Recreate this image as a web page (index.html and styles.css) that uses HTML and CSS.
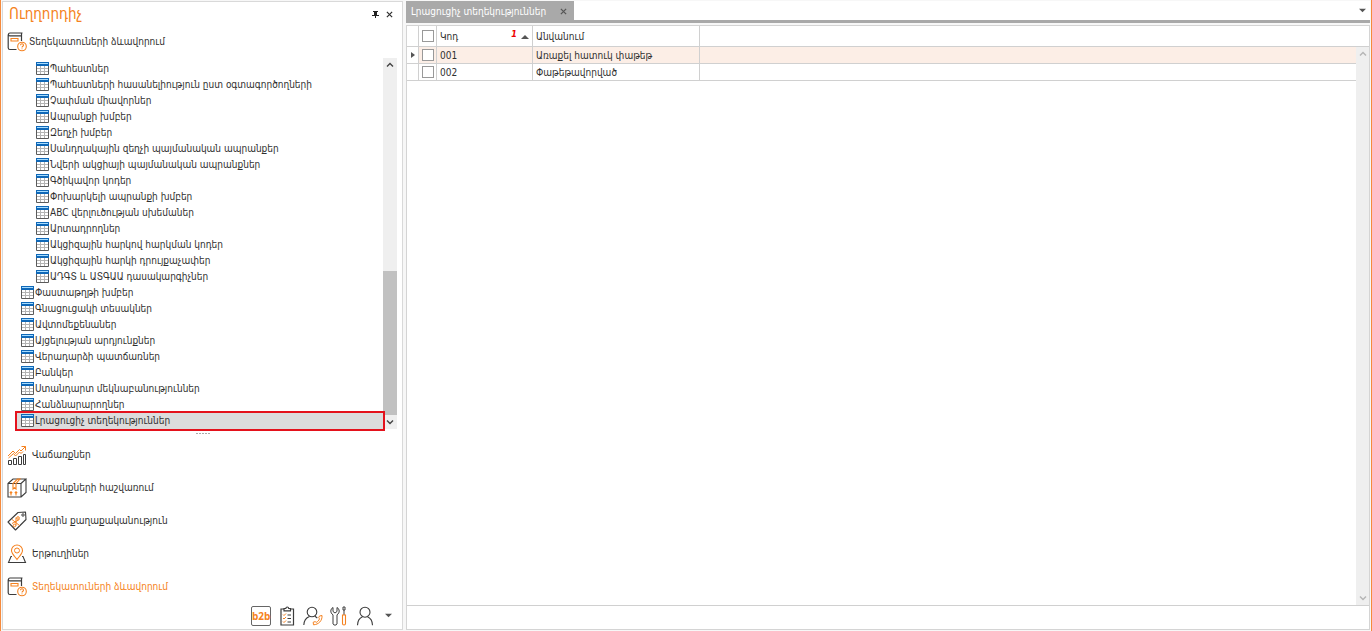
FILE: index.html
```
<!DOCTYPE html>
<html lang="hy">
<head>
<meta charset="utf-8">
<title>Լրացուցիչ տեղեկություններ</title>
<link rel="stylesheet" href="styles.css">
</head>
<body>
<svg class="defs" aria-hidden="true">
  <symbol id="i-table" viewBox="0 0 13 13">
    <path d="M0 0h13v13H0z" fill="#fff"/>
    <path d="M4.500 4v8M8.500 4v8M1 6.500h11M1 9.500h11" stroke="#b4b4b4" fill="none"/>
    <path d="M.5 3v9.500h12V3" stroke="#5a5a5a" fill="none"/>
    <path d="M0 0h13v4H0z" fill="#0f68b8"/>
    <path d="M1 1h11v1H1z" fill="#a5dcff"/>
  </symbol>
  <symbol id="i-book" viewBox="0 0 20 20">
    <g fill="none" stroke="#3c3c3c" stroke-width="1.200">
      <path d="M15.500 1H3C1 1 .8 3.800 3 3.800h11.500V9M1.200 2.500v13.200c0 1.200.7 1.800 1.800 1.800h6.500M14.500 1v2.800"/>
    </g>
    <g fill="none" stroke="#f58220" stroke-width="1.100">
      <path d="M4 6.500h7v2.500H4z"/><circle cx="15" cy="14.500" r="4.300"/>
      <path d="M13.500 13.300c0-2 3-2 3 0 0 1-1.500 1-1.500 2.200M15 16.500v.8"/>
    </g>
  </symbol>
  <symbol id="i-sales" viewBox="0 0 20 20">
    <g fill="none" stroke="#3c3c3c" stroke-width="1">
      <path d="M1.500 15.500h3v4h-3zM6.500 13.500h3v6h-3zM11.500 11.500h3v8h-3zM16.500 9.500h2v10h-2z"/>
    </g>
    <path d="M1 11l5-5 2.500 2.500 4-4 1.500 1.500L18.500 1.500M14.500 1.500h4v4M1.500 13l5-4.500 2 2.500 4-4 1.500 1.500 2-2" fill="none" stroke="#f58220"/>
  </symbol>
  <symbol id="i-box" viewBox="0 0 20 20">
    <path d="M1 5.500h13v13.500H1zM1 5.500L6 1h13l-5 4.500M19 1v13.500L14 19" fill="none" stroke="#3c3c3c" stroke-width="1.100"/>
    <path d="M6 11V5.500L10.500 1H13L9 5.500V11L7.500 9.800zM4 17.500V14M2.800 15L4 13.800 5.200 15M9 17.500V14M7.800 15L9 13.800l1.200 1.200" fill="none" stroke="#f58220" stroke-width="1.100"/>
  </symbol>
  <symbol id="i-tag" viewBox="0 0 20 20">
    <path d="M1 11L11 1.500 18.500 1 19 8.500 8.500 19z" fill="none" stroke="#3c3c3c" stroke-width="1.100" stroke-linejoin="round"/>
    <circle cx="16" cy="4" r="1.200" fill="none" stroke="#3c3c3c"/>
    <path d="M5 8.500l7.500 6M5 12.500l7.500-4M9 6.500v8" fill="none" stroke="#f58220"/>
    <circle cx="11" cy="7" r="1.300" fill="none" stroke="#f58220"/><circle cx="7.500" cy="14.500" r="1.300" fill="none" stroke="#f58220"/>
  </symbol>
  <symbol id="i-pin" viewBox="0 0 20 20">
    <path d="M5 12.500H4L1.500 18.500h17l-2.500-6h-1" fill="none" stroke="#3c3c3c" stroke-width="1.100"/>
    <path d="M10 15.500C7 11.500 4.500 9.500 4.500 6.500a5.500 5.500 0 0 1 11 0c0 3-2.500 5-5.500 9z" fill="#fff" stroke="#f58220" stroke-width="1.100"/>
    <circle cx="10" cy="6.500" r="2.500" fill="none" stroke="#f58220"/>
  </symbol>
  <symbol id="i-list" viewBox="0 0 20 20">
    <path d="M7 3H4v16h12.500V3h-3M7 2.500h1.800C9 .5 11.500.5 11.700 2.500h1.800v2.300H7z" fill="none" stroke="#3c3c3c" stroke-width="1.200"/>
    <path d="M10.500 9H14M10.500 12.500H14M10.500 16H14" stroke="#3c3c3c"/>
    <path d="M6 8.500l1 1 2-2M6 12l1 1 2-2M6 15.500l1 1 2-2" fill="none" stroke="#f58220"/>
  </symbol>
  <symbol id="i-call" viewBox="0 0 20 20">
    <circle cx="9" cy="6" r="4.800" fill="none" stroke="#3c3c3c" stroke-width="1.100"/>
    <path d="M.8 19c.2-4 2.200-7.200 5.700-8.500M12 10.300l2.300 1.700" fill="none" stroke="#3c3c3c" stroke-width="1.100"/>
    <path d="M16.500 10l2.500-.5c.5 5-3.500 9.200-8.500 9.300l-.3-2.600 2-.6 1 .8c1.500-.6 2.800-2 3.300-3.600l-.8-1z" fill="none" stroke="#f58220"/>
  </symbol>
  <symbol id="i-tools" viewBox="0 0 20 20">
    <path d="M4 1.500v4L6 7l2-1.500v-4C10.800 3 11 7 8 8.800V18c-.8 1.500-3.200 1.500-4 0V8.800C1 7 1.200 3 4 1.500z" fill="none" stroke="#3c3c3c"/>
    <path d="M14 1h2v3h-2zM15 4v5" fill="none" stroke="#3c3c3c"/>
    <path d="M13.500 9h3v8.500c0 2-3 2-3 0z" fill="none" stroke="#f58220" stroke-width="1.100"/>
  </symbol>
  <symbol id="i-user" viewBox="0 0 20 20">
    <circle cx="10" cy="6.200" r="5" fill="none" stroke="#3c3c3c" stroke-width="1.100"/>
    <path d="M2.500 19.200C2.600 15 4.500 12 7.500 10.700M17.500 19.200c-.1-4.200-2-7.200-5-8.500" fill="none" stroke="#3c3c3c" stroke-width="1.100"/>
  </symbol>
  <symbol id="i-up" viewBox="0 0 8 8"><path d="M1 5.500l3-3 3 3" fill="none" stroke="currentColor" stroke-width="1.400"/></symbol>
  <symbol id="i-down" viewBox="0 0 8 8"><path d="M1 2.500l3 3 3-3" fill="none" stroke="currentColor" stroke-width="1.400"/></symbol>
  <symbol id="i-menu" viewBox="0 0 8 8"><path d="M0 2h8L4 6z" fill="#555"/></symbol>
  <symbol id="i-x" viewBox="0 0 8 8"><path d="M1 1l6 6M7 1L1 7" stroke="currentColor" stroke-width="1.400"/></symbol>
</svg>
<div class="app">
  <aside class="navigator">
    <header class="nav-head">
      <h1 class="nav-title">Ուղղորդիչ</h1>
      <button class="icon-btn" aria-label="Ամրացնել"><svg class="tiny" viewBox="0 0 7 7"><path d="M1 .5h5M2.500 0v4M0 4.500h7M3.500 5v2" stroke="#222" fill="none"/><path d="M3 0h2v4H3z" fill="#222"/></svg></button>
      <button class="icon-btn" aria-label="Փակել"><svg class="tiny"><use href="#i-x"/></svg></button>
    </header>
    <div class="section"><svg class="ico"><use href="#i-book"/></svg><h2 class="section-title">Տեղեկատուների ձևավորում</h2></div>
    <div class="tree-wrap">
      <ul class="tree">
        <li class="node sub"><svg class="grid-ico"><use href="#i-table"/></svg>Պահեստներ</li>
        <li class="node sub"><svg class="grid-ico"><use href="#i-table"/></svg>Պահեստների հասանելիություն ըստ օգտագործողների</li>
        <li class="node sub"><svg class="grid-ico"><use href="#i-table"/></svg>Չափման միավորներ</li>
        <li class="node sub"><svg class="grid-ico"><use href="#i-table"/></svg>Ապրանքի խմբեր</li>
        <li class="node sub"><svg class="grid-ico"><use href="#i-table"/></svg>Զեղչի խմբեր</li>
        <li class="node sub"><svg class="grid-ico"><use href="#i-table"/></svg>Սանդղակային զեղչի պայմանական ապրանքեր</li>
        <li class="node sub"><svg class="grid-ico"><use href="#i-table"/></svg>Նվերի ակցիայի պայմանական ապրանքներ</li>
        <li class="node sub"><svg class="grid-ico"><use href="#i-table"/></svg>Գծիկավոր կոդեր</li>
        <li class="node sub"><svg class="grid-ico"><use href="#i-table"/></svg>Փոխարկելի ապրանքի խմբեր</li>
        <li class="node sub"><svg class="grid-ico"><use href="#i-table"/></svg>ABC վերլուծության սխեմաներ</li>
        <li class="node sub"><svg class="grid-ico"><use href="#i-table"/></svg>Արտադրողներ</li>
        <li class="node sub"><svg class="grid-ico"><use href="#i-table"/></svg>Ակցիզային հարկով հարկման կոդեր</li>
        <li class="node sub"><svg class="grid-ico"><use href="#i-table"/></svg>Ակցիզային հարկի դրույքաչափեր</li>
        <li class="node sub"><svg class="grid-ico"><use href="#i-table"/></svg>ԱԴԳՏ և ԱՏԳԱԱ դասակարգիչներ</li>
        <li class="node"><svg class="grid-ico"><use href="#i-table"/></svg>Փաստաթղթի խմբեր</li>
        <li class="node"><svg class="grid-ico"><use href="#i-table"/></svg>Գնացուցակի տեսակներ</li>
        <li class="node"><svg class="grid-ico"><use href="#i-table"/></svg>Ավտոմեքենաներ</li>
        <li class="node"><svg class="grid-ico"><use href="#i-table"/></svg>Այցելության արդյունքներ</li>
        <li class="node"><svg class="grid-ico"><use href="#i-table"/></svg>Վերադարձի պատճառներ</li>
        <li class="node"><svg class="grid-ico"><use href="#i-table"/></svg>Բանկեր</li>
        <li class="node"><svg class="grid-ico"><use href="#i-table"/></svg>Ստանդարտ մեկնաբանություններ</li>
        <li class="node"><svg class="grid-ico"><use href="#i-table"/></svg>Հանձնարարողներ</li>
        <li class="node selected"><svg class="grid-ico"><use href="#i-table"/></svg>Լրացուցիչ տեղեկություններ</li>
      </ul>
      <div class="scroll"><svg class="arrow"><use href="#i-up"/></svg><div class="track"><div class="thumb"></div></div><svg class="arrow"><use href="#i-down"/></svg></div>
    </div>
    <div class="grip"><i class="dot"></i><i class="dot"></i><i class="dot"></i><i class="dot"></i><i class="dot"></i></div>
    <nav class="groups">
      <button class="group"><svg class="ico"><use href="#i-sales"/></svg>Վաճառքներ</button>
      <button class="group"><svg class="ico"><use href="#i-box"/></svg>Ապրանքների հաշվառում</button>
      <button class="group"><svg class="ico"><use href="#i-tag"/></svg>Գնային քաղաքականություն</button>
      <button class="group"><svg class="ico"><use href="#i-pin"/></svg>Երթուղիներ</button>
      <button class="group active"><svg class="ico"><use href="#i-book"/></svg>Տեղեկատուների ձևավորում</button>
    </nav>
    <footer class="tools">
      <button class="tool b2b">b2b</button>
      <button class="tool" aria-label="Առաջադրանքներ"><svg class="ico"><use href="#i-list"/></svg></button>
      <button class="tool" aria-label="Զանգեր"><svg class="ico"><use href="#i-call"/></svg></button>
      <button class="tool" aria-label="Գործիքներ"><svg class="ico"><use href="#i-tools"/></svg></button>
      <button class="tool" aria-label="Օգտատեր"><svg class="ico"><use href="#i-user"/></svg></button>
      <button class="tool more" aria-label="Ավելին"><svg class="caret"><use href="#i-menu"/></svg></button>
    </footer>
  </aside>
  <main class="content">
    <div class="tabs">
      <div class="tab">Լրացուցիչ տեղեկություններ<button class="tab-close" aria-label="Փակել"><svg class="tab-x"><use href="#i-x"/></svg></button></div>
      <button class="tabs-menu" aria-label="Ներդիրներ"><svg class="caret"><use href="#i-menu"/></svg></button>
    </div>
    <div class="grid-panel">
      <div class="grid-area">
        <table class="grid">
          <colgroup><col class="c-mark"><col class="c-check"><col class="c-code"><col class="c-name"><col></colgroup>
          <thead><tr>
            <th></th><th class="check"><input class="box" type="checkbox" aria-label="Նշել բոլորը"></th>
            <th><div class="sort">Կոդ<span class="order">1</span><svg class="sort-up" viewBox="0 0 8 8"><path d="M0 6h8L4 2z" fill="#555"/></svg></div></th>
            <th>Անվանում</th><th class="rest"></th>
          </tr></thead>
          <tbody>
            <tr class="current"><td class="mark"><svg class="pointer" viewBox="0 0 4 8"><path d="M0 1l4 3-4 3z" fill="#555"/></svg></td><td class="check"><input class="box" type="checkbox" aria-label="001"></td><td>001</td><td>Առաքել հատուկ փաթեթ</td><td class="rest"></td></tr>
            <tr><td></td><td class="check"><input class="box" type="checkbox" aria-label="002"></td><td>002</td><td>Փաթեթավորված</td><td class="rest"></td></tr>
          </tbody>
        </table>
        <div class="scroll idle"><svg class="arrow"><use href="#i-up"/></svg><div class="track"></div><svg class="arrow"><use href="#i-down"/></svg></div>
      </div>
      <div class="grid-foot"></div>
    </div>
  </main>
</div>
</body>
</html>
```
FILE: styles.css
```
* { box-sizing: border-box; }
body {
  margin: 0;
  background: #f7f7f7;
  color: #303030;
  font: 10px/16px "DejaVu Sans Condensed", "DejaVu Sans", sans-serif;
}
button {
  margin: 0;
  padding: 0;
  border: 0;
  background: none;
  color: inherit;
  font: inherit;
}
svg { display: block; flex: none; }
.defs { position: absolute; width: 0; height: 0; }
.app {
  display: flex;
  gap: 3px;
  height: 100vh;
  padding: 1px;
  border-left: 1px solid #f58a3c;
  border-right: 1px solid #f58a3c;
}
.navigator {
  display: flex;
  flex-direction: column;
  flex: none;
  width: 401px;
  border: 1px solid #d9d9d9;
  background: #fff;
}
.nav-head {
  display: flex;
  align-items: center;
  flex: none;
  gap: 6px;
  height: 24px;
  padding: 0 8px 0 6px;
}
.nav-title {
  flex: 1;
  margin: 0;
  color: #f58220;
  font-size: 15px;
  font-weight: 400;
  line-height: 24px;
}
.icon-btn { width: 8px; height: 8px; }
.tiny { width: 7px; height: 7px; }
.ico { width: 20px; height: 20px; }
.section {
  display: flex;
  align-items: center;
  flex: none;
  gap: 2px;
  height: 32px;
  padding: 0 4px;
}
.section-title { margin: 0; font-size: 10px; font-weight: 400; }
.tree-wrap {
  display: flex;
  flex: 1;
  min-height: 0;
  padding-right: 5px;
}
.tree {
  display: flex;
  flex-direction: column;
  justify-content: flex-end;
  flex: 1;
  margin: 0;
  padding: 0 0 0 14px;
  list-style: none;
}
.node {
  display: flex;
  align-items: center;
  flex: none;
  gap: 1px;
  height: 16px;
  padding-left: 4px;
  white-space: nowrap;
}
.node.sub { padding-left: 19px; }
.node.selected {
  background: #dcdcdc;
  outline: 2px solid #e4121c;
  z-index: 1;
}
.grid-ico { width: 13px; height: 13px; margin-bottom: 1px; }
.scroll {
  display: flex;
  flex-direction: column;
  flex: none;
  width: 14px;
  background: #efefef;
  color: #444;
}
.arrow { width: 8px; height: 8px; margin: 3px; }
.track {
  display: flex;
  flex: 1;
  flex-direction: column;
  justify-content: flex-end;
}
.thumb { height: 42%; background: #c1c1c1; }
.grip {
  display: flex;
  justify-content: center;
  align-items: center;
  flex: none;
  gap: 1px;
  height: 9px;
}
.dot { width: 2px; height: 1px; background: #aaa; }
.groups { display: flex; flex-direction: column; flex: none; }
.group {
  display: flex;
  align-items: center;
  gap: 5px;
  height: 33px;
  padding: 0 4px;
  text-align: left;
}
.group.active { color: #f58220; }
.tools {
  display: flex;
  justify-content: flex-end;
  align-items: center;
  flex: none;
  gap: 6px;
  height: 26px;
  padding: 0 6px 1px 0;
}
.tool { width: 20px; height: 20px; }
.tool.b2b {
  border: 1px solid #666;
  border-radius: 2px;
  color: #f58220;
  font: 700 10px/18px "Open Sans", sans-serif;
}
.tool.more { width: 15px; display: grid; place-items: center; }
.caret { width: 7px; height: 7px; }
.content {
  display: flex;
  flex-direction: column;
  flex: 1;
  min-width: 0;
}
.tabs {
  display: flex;
  justify-content: space-between;
  flex: none;
  height: 22px;
  padding-right: 4px;
  border-bottom: 3px solid #a9a9a9;
  background: #fff;
}
.tab {
  display: flex;
  align-items: center;
  gap: 14px;
  padding: 2px 7px 0 5px;
  background: #a9a9a9;
  color: #fff;
}
.tab-close { color: #555; }
.tab-x { width: 7px; height: 7px; }
.grid-panel {
  display: flex;
  flex-direction: column;
  flex: 1;
  margin-top: 2px;
  border: 1px solid #d4d4d4;
  background: #fff;
}
.grid-area { position: relative; flex: 1; }
.grid {
  width: 100%;
  border-collapse: separate;
  border-spacing: 0;
  table-layout: fixed;
}
.c-mark { width: 12px; }
.c-check { width: 18px; }
.c-code { width: 96px; }
.c-name { width: 167px; }
.grid th, .grid td {
  height: 17px;
  padding: 1px 3px 0;
  border-right: 1px solid #d0d0d0;
  border-bottom: 1px solid #d0d0d0;
  font-weight: 400;
  line-height: 15px;
  text-align: left;
}
.grid th { height: 21px; }
.grid .rest { border-right: 0; }
.grid .check { padding: 0 0 0 3px; }
.grid .mark { padding: 0 0 0 4px; background: #fff; }
.current { background: #fceee6; }
.pointer { width: 4px; height: 8px; }
.box {
  display: block;
  appearance: none;
  width: 12px;
  height: 12px;
  margin: 0;
  border: 1px solid #999;
  background: #fff;
}
.sort { display: flex; align-items: center; }
.order {
  margin-left: auto;
  color: #e00;
  font-size: 9px;
  font-style: italic;
  font-weight: 700;
  line-height: 10px;
  align-self: flex-start;
}
.sort-up { width: 8px; height: 8px; margin-left: 4px; }
.idle {
  position: absolute;
  top: 21px;
  right: 0;
  bottom: 0;
  width: 13px;
  color: #b5b5b5;
}
.grid-foot { height: 24px; border-top: 1px solid #d0d0d0; }
```
